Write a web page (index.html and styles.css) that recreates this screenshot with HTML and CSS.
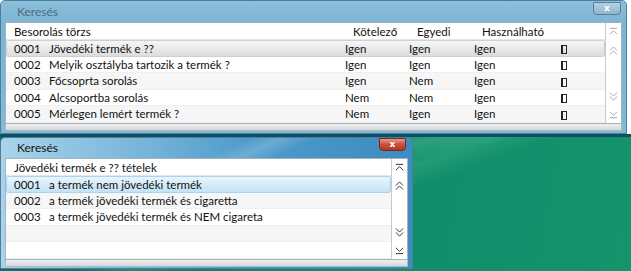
FILE: index.html
```html
<!DOCTYPE html>
<html lang="hu">

<head>
  <meta charset="UTF-8" />
  <title>Keresés</title>
  <link rel="stylesheet" href="styles.css">
</head>

<body>
  <div class="screen">
    <div class="top-row">
      <div class="win win-inactive win-top">
        <div class="titlebar">
          <span class="title">Keresés</span>
          <span class="close">x</span>
        </div>
        <div class="panel">
          <div class="list list-top">
            <div class="row head">
              <span class="wide">Besorolás törzs</span>
              <span class="hcol">Kötelező</span>
              <span class="hcol">Egyedi</span>
              <span class="hcol">Használható</span>
              <span></span>
            </div>
            <div class="row sel-grey">
              <span>0001</span><span>Jövedéki termék e ??</span>
              <span>Igen</span><span>Igen</span><span>Igen</span><span><i class="chk"></i></span>
            </div>
            <div class="row">
              <span>0002</span><span>Melyik osztályba tartozik a termék ?</span>
              <span>Igen</span><span>Igen</span><span>Igen</span><span><i class="chk"></i></span>
            </div>
            <div class="row alt">
              <span>0003</span><span>Főcsoprta sorolás</span>
              <span>Igen</span><span>Nem</span><span>Igen</span><span><i class="chk"></i></span>
            </div>
            <div class="row">
              <span>0004</span><span>Alcsoportba sorolás</span>
              <span>Nem</span><span>Nem</span><span>Igen</span><span><i class="chk"></i></span>
            </div>
            <div class="row alt">
              <span>0005</span><span>Mérlegen lemért termék ?</span>
              <span>Nem</span><span>Igen</span><span>Igen</span><span><i class="chk"></i></span>
            </div>
          </div>
          <div class="scroll">
            <div class="scroll-group">
              <svg viewBox="0 0 10 10"><path d="M1 1.5h8M1 8l4-4 4 4" /></svg>
              <svg viewBox="0 0 10 10"><path d="M1 5l4-4 4 4M1 9.5l4-4 4 4" /></svg>
            </div>
            <div class="scroll-group">
              <svg viewBox="0 0 10 10"><path d="M1 0.5l4 4 4-4M1 5l4 4 4-4" /></svg>
              <svg viewBox="0 0 10 10"><path d="M1 2l4 4 4-4M1 8.5h8" /></svg>
            </div>
          </div>
        </div>
        <div class="status"></div>
      </div>
    </div>

    <div class="bottom-row">
      <div class="win win-active win-bottom">
        <div class="titlebar">
          <span class="title">Keresés</span>
          <span class="close">x</span>
        </div>
        <div class="panel">
          <div class="list list-bottom">
            <div class="row head">
              <span class="wide">Jövedéki termék e ?? tételek</span>
            </div>
            <div class="row sel-blue">
              <span>0001</span><span>a termék nem jövedéki termék</span>
            </div>
            <div class="row alt">
              <span>0002</span><span>a termék jövedéki termék és cigaretta</span>
            </div>
            <div class="row">
              <span>0003</span><span>a termék jövedéki termék és NEM cigareta</span>
            </div>
            <div class="row alt"></div>
            <div class="row"></div>
          </div>
          <div class="scroll">
            <div class="scroll-group">
              <svg viewBox="0 0 10 10"><path d="M1 1.5h8M1 8l4-4 4 4" /></svg>
              <svg viewBox="0 0 10 10"><path d="M1 5l4-4 4 4M1 9.5l4-4 4 4" /></svg>
            </div>
            <div class="scroll-group">
              <svg viewBox="0 0 10 10"><path d="M1 0.5l4 4 4-4M1 5l4 4 4-4" /></svg>
              <svg viewBox="0 0 10 10"><path d="M1 2l4 4 4-4M1 8.5h8" /></svg>
            </div>
          </div>
        </div>
        <div class="status"></div>
      </div>
      <div class="desktop"></div>
    </div>
  </div>
</body>

</html>
```

FILE: styles.css
```css
* {
  box-sizing: border-box;
}

body {
  margin: 0;
  background: #fff;
  font-family: Lato, "Open Sans", sans-serif;
  font-size: 11.5px;
  color: #111;
}

.screen {
  width: 631px;
  height: 271px;
  display: flex;
  flex-direction: column;
}

.top-row {
  height: 134px;
  display: flex;
}

.bottom-row {
  flex: 1;
  display: flex;
  padding-top: 3px;
  background: linear-gradient(180deg, #0d4f63 0, #0d4f63 3px, transparent 3px),
    linear-gradient(168deg, transparent 30%, rgba(150, 230, 180, 0.22) 36%, transparent 42%),
    linear-gradient(160deg, transparent 45%, rgba(120, 220, 170, 0.18) 50%, transparent 56%),
    linear-gradient(100deg, #0a6d6a 0%, #0d8a6c 45%, #15936b 100%);
}

/* window frame */
.win {
  display: flex;
  flex-direction: column;
  border: 1px solid #4f7e9c;
  border-radius: 5px 5px 0 0;
  padding: 0 4px;
}

.win-top {
  width: 627px;
  height: 134px;
  background: linear-gradient(180deg, #8cc0dc 0, #7cb4d3 22px, #82b9d6 100%);
}

.win-bottom {
  width: 413px;
  height: 132px;
  background: linear-gradient(90deg, #a9d3ea 0, #7fb9dc 30%, #4e9bcb 60%, #3d8cc0 100%);
}

.titlebar {
  height: 21px;
  display: flex;
  align-items: center;
  justify-content: space-between;
  padding: 0 2px 0 12px;
}

.win-bottom .titlebar {
  height: 20px;
  background: linear-gradient(155deg, transparent 55%, rgba(255, 255, 255, 0.18) 62%, transparent 70%);
}

.title {
  font-size: 12px;
  padding-bottom: 1px;
}

.win-inactive .title {
  color: #4d6b80;
}

.win-active .title {
  color: #151515;
}

.close {
  width: 28px;
  height: 13px;
  margin-top: -6px;
  border: 1px solid #5b7f98;
  border-radius: 0 0 4px 4px;
  font: bold 9px/11px "DejaVu Sans", sans-serif;
  text-align: center;
  color: #fff;
}

.win-inactive .close {
  background: linear-gradient(180deg, #b3d2e3, #8fb6cc);
  margin-right: -1px;
}

.win-active .close {
  width: 27px;
  margin-top: -8px;
  border-color: #6f2a22;
  background: linear-gradient(180deg, #e39a8b 0, #c9503c 50%, #b23623 100%);
}

/* list area */
.panel {
  display: flex;
  background: #fff;
  border: 1px solid #9fb3c2;
}

.list {
  flex: 1;
  border-right: 1px solid #c9c9c9;
}

.row {
  height: 16.5px;
  display: grid;
  align-items: center;
  padding-left: 8px;
  white-space: nowrap;
  border-bottom: 1px solid #f0f0f0;
}

.row.head {
  height: 17px;
  border-bottom: 1px solid #e6e6e6;
}

.row.alt {
  background: #f6f6f6;
}

.list-top .row {
  grid-template-columns: 35px 296px 64px 65px 87px 1fr;
}

.list-bottom .row {
  grid-template-columns: 35px 1fr;
}

.wide {
  grid-column: span 2;
}

.hcol {
  padding-left: 8px;
}

.sel-grey {
  background: linear-gradient(180deg, #f7f7f7 0, #e6e6e6 60%, #dcdcdc 100%);
  border: 1px solid #cfcfcf;
  border-radius: 2px;
  padding-left: 7px;
}

.sel-blue {
  background: linear-gradient(180deg, #eaf5fc 0, #d3ebf9 55%, #c3e3f6 100%);
  border: 1px solid #a9d3ee;
  border-radius: 2px;
  padding-left: 7px;
}

.chk {
  display: inline-block;
  width: 6px;
  height: 9px;
  border: 1px solid #222;
  border-left-width: 2px;
  vertical-align: middle;
}

.scroll {
  width: 15px;
  display: flex;
  flex-direction: column;
  justify-content: space-between;
  padding: 4px 0 4px 3px;
}

.scroll-group {
  display: flex;
  flex-direction: column;
  gap: 9px;
}

.list-top + .scroll .scroll-group:first-child {
  gap: 10px;
}

.scroll svg {
  width: 9px;
  height: 9px;
  fill: none;
  stroke-width: 1.1;
}

.win-inactive .scroll svg {
  stroke: #a4abb0;
}

.win-active .scroll svg {
  stroke: #333;
}

.status {
  height: 7px;
  background: linear-gradient(180deg, #f0f0f0, #d8d8d8);
  border: 1px solid #a9b9c4;
  border-top: none;
}

.desktop {
  flex: 1;
}
```
